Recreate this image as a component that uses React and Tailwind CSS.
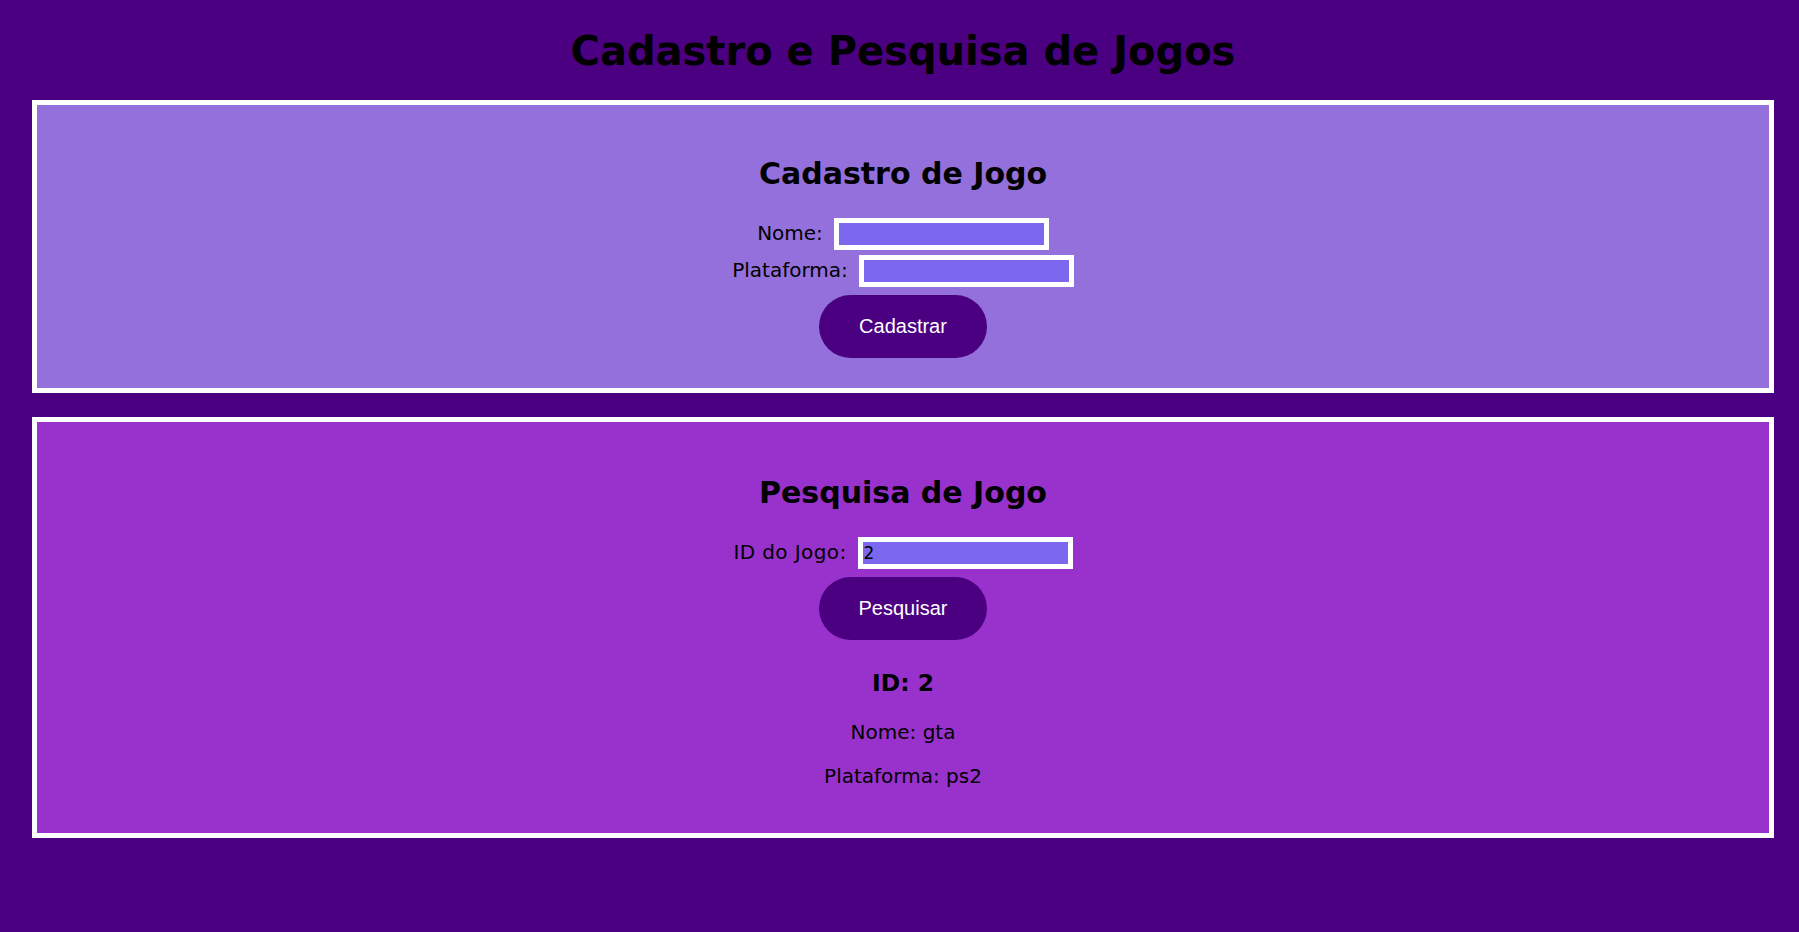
import React from "react";

export default function App() {
  return (
    <div className="min-h-screen bg-[#4B0082] text-black pt-[28px] font-['DejaVu_Sans',Verdana,sans-serif]">
      <div className="ml-[32px] mr-[25px]">
        <h1 className="m-0 text-center text-[40px] leading-[47px] font-bold">
          Cadastro e Pesquisa de Jogos
        </h1>

        <div className="mt-[25px] border-[5px] border-white bg-[#9370DB] pt-[51px] pb-[30px]">
          <h2 className="m-0 text-center text-[30px] leading-[35px] font-bold">Cadastro de Jogo</h2>
          <div className="mt-[27px] flex justify-center items-baseline gap-[11px]">
            <label className="text-[20px] leading-[23px]">Nome:</label>
            <input
              type="text"
              className="w-[215px] h-[32px] border-[5px] border-white bg-[#7B68EE] px-[1px] py-[1px] text-[17px] outline-none font-['DejaVu_Sans',sans-serif]"
            />
          </div>
          <div className="mt-[5px] flex justify-center items-baseline gap-[11px]">
            <label className="text-[20px] leading-[23px]">Plataforma:</label>
            <input
              type="text"
              className="w-[215px] h-[32px] border-[5px] border-white bg-[#7B68EE] px-[1px] py-[1px] text-[17px] outline-none font-['DejaVu_Sans',sans-serif]"
            />
          </div>
          <button className="mt-[8px] mx-auto block rounded-full bg-[#4B0082] px-[40px] py-[20px] text-[20px] leading-[23px] text-white font-['Liberation_Sans',Arial,sans-serif]">
            Cadastrar
          </button>
        </div>

        <div className="mt-[24px] border-[5px] border-white bg-[#9932CC] pt-[53px] pb-[45px]">
          <h2 className="m-0 text-center text-[30px] leading-[35px] font-bold">Pesquisa de Jogo</h2>
          <div className="mt-[27px] flex justify-center items-baseline gap-[11px]">
            <label className="text-[20px] leading-[23px] tracking-[0.4px]">ID do Jogo:</label>
            <input
              type="text"
              defaultValue="2"
              className="w-[215px] h-[32px] border-[5px] border-white bg-[#7B68EE] px-[1px] py-[1px] text-[17px] text-black outline-none font-['DejaVu_Sans',sans-serif]"
            />
          </div>
          <button className="mt-[8px] mx-auto block rounded-full bg-[#4B0082] px-[40px] py-[20px] text-[20px] leading-[23px] text-white font-['Liberation_Sans',Arial,sans-serif]">
            Pesquisar
          </button>
          <h3 className="mt-[30px] text-center text-[23.4px] leading-[27px] font-bold">ID: 2</h3>
          <p className="mt-[24px] text-center text-[20px] leading-[23px]">Nome: gta</p>
          <p className="mt-[21px] text-center text-[20px] leading-[23px]">Plataforma: ps2</p>
        </div>
      </div>
    </div>
  );
}
